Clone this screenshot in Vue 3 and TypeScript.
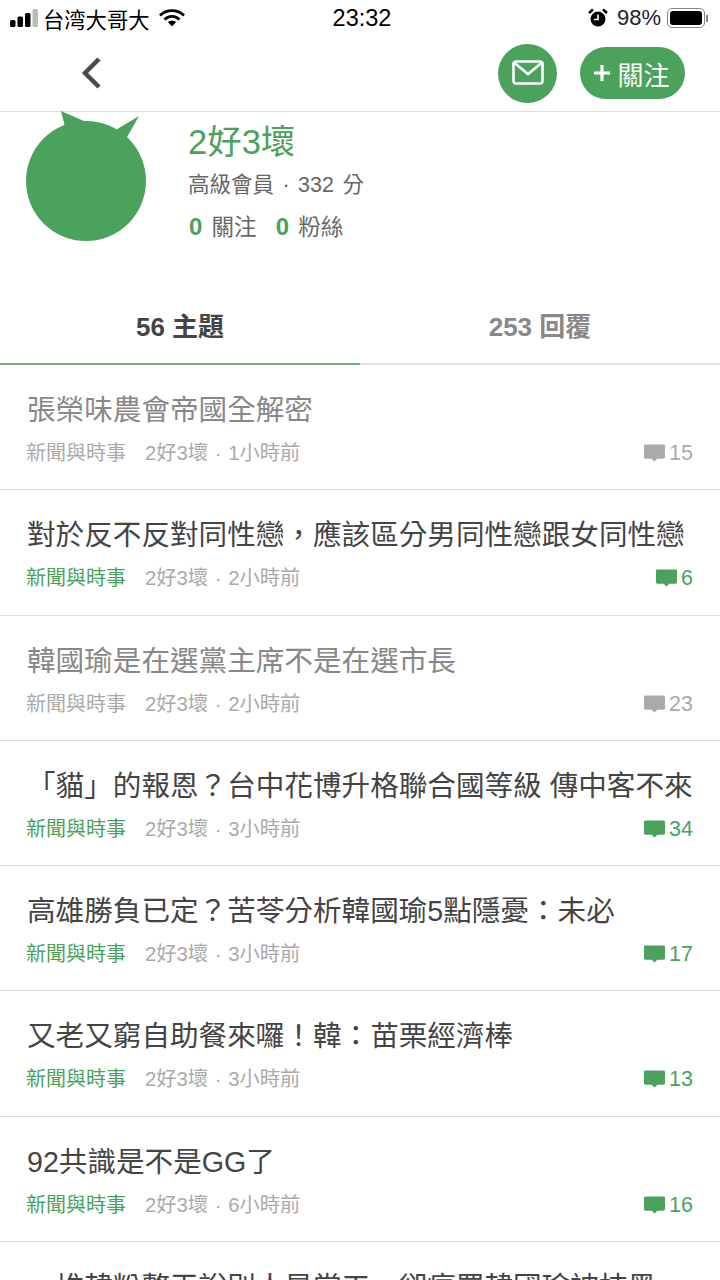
<template>
  <div class="page">
    <div class="status-bar">
      <div class="status-left">
        <svg class="signal" width="28" height="18" viewBox="0 0 28 18">
          <rect x="0" y="11" width="5.500" height="7" rx="1.500" fill="#000" />
          <rect x="7.500" y="7.500" width="5.500" height="10.500" rx="1.500" fill="#000" />
          <rect x="15" y="4" width="5.500" height="14" rx="1.500" fill="#000" />
          <rect x="22.500" y="0" width="5.500" height="18" rx="1.500" fill="#bbb" />
        </svg>
        <span class="carrier">台湾大哥大</span>
        <svg width="26" height="18" viewBox="0 0 26 18">
          <path d="M1 6.500a17 17 0 0 1 24 0" fill="none" stroke="#000" stroke-width="2.800" />
          <path d="M5.500 10.500a10.600 10.600 0 0 1 15 0" fill="none" stroke="#000" stroke-width="2.800" />
          <path d="M13 17.500l-4.200-4.400a6 6 0 0 1 8.400 0z" fill="#000" />
        </svg>
      </div>
      <span class="clock">23:32</span>
      <div class="status-right">
        <svg width="20" height="20" viewBox="0 0 20 20">
          <circle cx="10" cy="11" r="7.500" fill="#000" />
          <path d="M10 6.500V11.500H6" fill="none" stroke="#fff" stroke-width="1.600" />
          <path d="M1 5l4-3.500M19 5l-4-3.500" stroke="#000" stroke-width="2.600" />
        </svg>
        <span class="battery-text">98%</span>
        <div class="battery"><div class="battery-fill"></div></div>
        <div class="battery-cap"></div>
      </div>
    </div>

    <div class="nav-bar">
      <svg class="back" width="22" height="34" viewBox="0 0 22 34">
        <path d="M19 3L5 17l14 14" fill="none" stroke="#4a4a4a" stroke-width="4.400" />
      </svg>
      <div class="nav-actions">
        <button class="mail-btn">
          <svg width="32" height="26" viewBox="0 0 32 26">
            <rect x="1.500" y="1.500" width="29" height="22" rx="2.500" fill="none" stroke="#fff" stroke-width="2.600" />
            <path d="M2.500 3l13.500 11L29.500 3" fill="none" stroke="#fff" stroke-width="2.600" />
          </svg>
        </button>
        <button class="follow-btn">
          <svg width="18" height="18" viewBox="0 0 18 18">
            <path d="M9 1v16M1 9h16" stroke="#fff" stroke-width="3.200" />
          </svg>
          <span>關注</span>
        </button>
      </div>
    </div>

    <div class="profile">
      <svg class="avatar" width="120" height="130" viewBox="0 0 120 130">
        <path d="M35 0L58 10L88 20L113 5L100 28L40 20z" fill="#4aa25c" />
        <circle cx="60" cy="70" r="60" fill="#4aa25c" />
      </svg>
      <div class="profile-info">
        <div class="name">2好3壞</div>
        <div class="level">高級會員 · 332 分</div>
        <div class="counts">
          <span><b>0</b> 關注</span>
          <span><b>0</b> 粉絲</span>
        </div>
      </div>
    </div>

    <div class="tabs">
      <div class="tab active">56 主題</div>
      <div class="tab">253 回覆</div>
    </div>

    <div class="list">
      <div v-for="topic in topics" :key="topic.title" class="row">
        <div class="title" :class="{ read: topic.read }">{{ topic.title }}</div>
        <div class="meta">
          <span class="category" :class="{ read: topic.read }">新聞與時事</span>
          <span class="author">2好3壞 · {{ topic.time }}</span>
          <span class="replies" :class="{ read: topic.read }">
            <svg width="21" height="18" viewBox="0 0 22 18">
              <path d="M1.500 0h19A1.500 1.500 0 0 1 22 1.500v12a1.500 1.500 0 0 1-1.500 1.500H14l-3 3-3-3H1.500A1.500 1.500 0 0 1 0 13.500v-12A1.500 1.500 0 0 1 1.500 0z" fill="currentColor" />
            </svg>
            {{ topic.replies }}
          </span>
        </div>
      </div>
    </div>
  </div>
</template>

<script setup lang="ts">
interface Topic {
  title: string
  time: string
  replies: number
  read?: boolean
}

const topics: Topic[] = [
  { title: '張榮味農會帝國全解密', time: '1小時前', replies: 15, read: true },
  { title: '對於反不反對同性戀，應該區分男同性戀跟女同性戀', time: '2小時前', replies: 6 },
  { title: '韓國瑜是在選黨主席不是在選市長', time: '2小時前', replies: 23, read: true },
  { title: '「貓」的報恩？台中花博升格聯合國等級 傳中客不來', time: '3小時前', replies: 34 },
  { title: '高雄勝負已定？苦苓分析韓國瑜5點隱憂：未必', time: '3小時前', replies: 17 },
  { title: '又老又窮自助餐來囉！韓：苗栗經濟棒', time: '3小時前', replies: 13 },
  { title: '92共識是不是GG了', time: '6小時前', replies: 16 },
  { title: '一堆韓粉整天說別人是當工，卻瘋罵韓國瑜被抹黑', time: '6小時前', replies: 9 }
]
</script>

<style>
html,
body {
  margin: 0;
  background: #fff;
}
</style>

<style scoped>
.page {
  width: 720px;
  height: 1280px;
  overflow: hidden;
  background: #fff;
  font-family: "Liberation Sans", "Noto Sans CJK TC", sans-serif;
  color: #444;
}

.status-bar {
  height: 36px;
  display: grid;
  grid-template-columns: 1fr auto 1fr;
  align-items: center;
  padding: 0 10px;
  color: #000;
}

.status-left,
.status-right {
  display: flex;
  align-items: center;
}

.status-right {
  justify-content: flex-end;
  padding-right: 2px;
}

.signal {
  margin-right: 5px;
}

.carrier {
  font-size: 21.300px;
  margin-right: 9px;
}

.clock {
  font-size: 23.500px;
  font-weight: 500;
  margin-left: 4px;
}

.battery-text {
  font-size: 22px;
  margin: 0 6px 0 9px;
  color: #222;
}

.battery {
  width: 38px;
  height: 20px;
  box-sizing: border-box;
  padding: 2px;
  border: 1.500px solid #888;
  border-radius: 5px;
}

.battery-fill {
  height: 100%;
  background: #000;
  border-radius: 3px;
}

.battery-cap {
  width: 2px;
  height: 7px;
  margin-left: 1px;
  background: #888;
}

.nav-bar {
  height: 76px;
  box-sizing: border-box;
  display: flex;
  align-items: center;
  justify-content: space-between;
  padding: 0 35px 1px 80px;
  border-bottom: 1px solid #ddd;
}

.back {
  display: block;
}

.nav-actions {
  display: flex;
  align-items: center;
  gap: 23px;
}

.mail-btn,
.follow-btn {
  border: none;
  padding: 0;
  display: flex;
  align-items: center;
  justify-content: center;
  background: #4aa25c;
  color: #fff;
}

.mail-btn {
  width: 59px;
  height: 59px;
  border-radius: 50%;
}

.follow-btn {
  width: 105px;
  height: 52px;
  border-radius: 26px;
  gap: 6px;
  padding-right: 2px;
  font-family: inherit;
  font-size: 26px;
}

.profile {
  height: 187px;
  display: flex;
  gap: 42px;
  padding-left: 26px;
}

.avatar {
  display: block;
  margin-top: -1px;
}

.profile-info {
  padding-top: 8px;
}

.name {
  font-size: 34.500px;
  line-height: 44px;
  color: #4aa25c;
}

.level {
  font-size: 21.500px;
  line-height: 30px;
  margin-top: 6px;
  color: #666;
  word-spacing: 2.500px;
}

.counts {
  display: flex;
  gap: 19px;
  font-size: 22.500px;
  line-height: 30px;
  margin-top: 12px;
  padding-left: 1px;
  color: #666;
}

.counts b {
  font-size: 24px;
  color: #4aa25c;
  margin-right: 3px;
}

.tabs {
  height: 52px;
  padding-top: 12px;
  display: flex;
  border-bottom: 2px solid #e4e4e4;
}

.tab {
  flex: 1;
  text-align: center;
  font-size: 26px;
  line-height: 32px;
  font-weight: 700;
  color: #888;
  margin-bottom: -2px;
}

.tab.active {
  color: #444;
  border-bottom: 2px solid #72ae80;
}

.row {
  height: 125.300px;
  box-sizing: border-box;
  padding: 26px 27px 0;
  border-bottom: 1px solid #ddd;
}

.title {
  font-size: 28.600px;
  line-height: 38px;
  color: #444;
  white-space: nowrap;
}

.title.read {
  color: #888;
}

.meta {
  display: flex;
  align-items: center;
  margin-top: 9px;
  font-size: 20px;
  line-height: 30px;
  color: #aaa;
}

.category {
  color: #4aa25c;
  margin: 0 19px 0 -1px;
}

.category.read {
  color: #aaa;
}

.author {
  font-size: 20.300px;
  word-spacing: 1px;
}

.replies {
  margin-left: auto;
  display: flex;
  align-items: center;
  gap: 4px;
  font-size: 21.500px;
  color: #4aa25c;
}

.replies.read {
  color: #aaa;
}
</style>
